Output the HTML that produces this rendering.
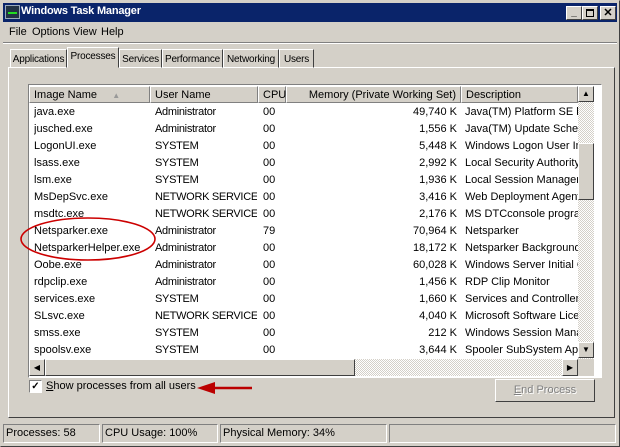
<!DOCTYPE html>
<html><head><style>
*{margin:0;padding:0;box-sizing:border-box}
body{width:620px;height:447px;background:#d4d0c8;font:11px "Liberation Sans",sans-serif;color:#000;position:relative;overflow:hidden}
.a{position:absolute;white-space:nowrap}
.out{border:1px solid;border-color:#fff #404040 #404040 #fff}
.in{border:1px solid;border-color:#808080 #fff #fff #808080}
.tab{position:absolute;top:49px;height:19px;border:1px solid;border-color:#fff #404040 transparent #fff;padding:4px 0 0;text-align:center;font-size:10px;letter-spacing:-0.2px;white-space:nowrap}
.hd{position:absolute;top:86px;height:17px;border:1px solid;border-color:#fff #808080 #808080 #fff;background:#d4d0c8;padding:2px 4px 0}
.row{position:absolute;left:30px;width:548px;height:17px}
.row span{position:absolute;top:2px;white-space:nowrap;overflow:hidden}
.sb{position:absolute;background:#d4d0c8;border:1px solid;border-color:#fff #404040 #404040 #fff}
</style></head><body>
<div class="a" style="left:0;top:0;width:620px;height:447px;border:1px solid;border-color:#d4d0c8 #404040 #404040 #d4d0c8"></div>
<div class="a" style="left:3px;top:3px;width:614px;height:19px;background:#0a246a"></div>
<div class="a" style="left:5px;top:5px;width:15px;height:14px;background:#234;border:1px solid #9ab"><div style="margin:3px 2px;height:5px;border-bottom:2px solid #2d2"></div></div>
<div class="a" style="left:21px;top:5px;color:#fff;font-weight:bold;font-size:11px;letter-spacing:-0.2px">Windows Task Manager</div>
<div class="a out" style="left:566px;top:6px;width:16px;height:14px;background:#d4d0c8;font-weight:bold;text-align:center;font-size:10px;line-height:12px">_</div>
<div class="a out" style="left:582px;top:6px;width:16px;height:14px;background:#d4d0c8"><div style="margin:2px 3px;height:8px;border:1px solid #000;border-top-width:2px"></div></div>
<div class="a out" style="left:600px;top:6px;width:16px;height:14px;background:#d4d0c8;font-weight:bold;text-align:center;line-height:12px">✕</div>
<div class="a" style="left:9px;top:26px">File</div>
<div class="a" style="left:32px;top:26px">Options</div>
<div class="a" style="left:73px;top:26px">View</div>
<div class="a" style="left:101px;top:26px">Help</div>
<div class="a" style="left:3px;top:42px;width:614px;height:2px;border-top:1px solid #808080;border-bottom:1px solid #fff"></div>
<div class="a" style="left:8px;top:67px;width:607px;height:351px;border:1px solid;border-color:#fff #404040 #404040 #fff"></div>
<div class="tab" style="left:10px;width:57px">Applications</div>
<div class="tab" style="left:67px;top:47px;height:21px;width:52px;background:#d4d0c8;z-index:2;padding-top:3px">Processes</div>
<div class="tab" style="left:119px;width:43px">Services</div>
<div class="tab" style="left:162px;width:61px">Performance</div>
<div class="tab" style="left:223px;width:56px">Networking</div>
<div class="tab" style="left:279px;width:35px">Users</div>
<div class="a in" style="left:28px;top:84px;width:574px;height:294px;background:#fff"></div>
<div class="hd" style="left:29px;width:121px">Image Name &nbsp;&nbsp;&nbsp;&nbsp;<span style="color:#999;font-size:8px">▲</span></div>
<div class="hd" style="left:150px;width:108px">User Name</div>
<div class="hd" style="left:258px;width:28px">CPU</div>
<div class="hd" style="left:286px;width:175px;text-align:right">Memory (Private Working Set)</div>
<div class="hd" style="left:461px;width:117px;overflow:hidden">Description</div>
<div id="rows"></div>
<div class="a" style="left:578px;top:102px;width:16px;height:257px;background:repeating-conic-gradient(#fff 0 25%,#d4d0c8 0 50%) 0 0/2px 2px"></div>
<div class="sb" style="left:578px;top:86px;width:16px;height:16px;font-size:8px;text-align:center;line-height:14px">▲</div>
<div class="sb" style="left:578px;top:143px;width:16px;height:57px"></div>
<div class="sb" style="left:578px;top:342px;width:16px;height:16px;font-size:8px;text-align:center;line-height:14px">▼</div>
<div class="a" style="left:29px;top:359px;width:549px;height:17px;background:repeating-conic-gradient(#fff 0 25%,#d4d0c8 0 50%) 0 0/2px 2px"></div>
<div class="sb" style="left:29px;top:359px;width:16px;height:17px;font-size:8px;text-align:center;line-height:15px">◀</div>
<div class="sb" style="left:45px;top:359px;width:310px;height:17px"></div>
<div class="sb" style="left:562px;top:359px;width:16px;height:17px;font-size:8px;text-align:center;line-height:15px">▶</div>
<div class="a" style="left:578px;top:359px;width:16px;height:17px;background:#d4d0c8"></div>
<svg class="a" style="left:0;top:0" width="620" height="447">
<ellipse cx="88" cy="239" rx="67" ry="21" fill="none" stroke="#c00" stroke-width="1.6"/>
<line x1="252" y1="388" x2="212" y2="388" stroke="#b00" stroke-width="2.5"/>
<polygon points="197,388 215,382 215,394" fill="#b00"/>
</svg>
<div class="a" style="left:29px;top:380px;width:13px;height:13px;background:#fff;border:1px solid;border-color:#808080 #fff #fff #808080;font-size:10px;line-height:11px;text-align:center;font-weight:bold">✓</div>
<div class="a" style="left:46px;top:380px"><u>S</u>how processes from all users</div>
<div class="a out" style="left:495px;top:379px;width:100px;height:23px;text-align:center;line-height:21px;color:#808080;text-shadow:1px 1px #fff"><u>E</u>nd Process</div>
<div class="a in" style="left:3px;top:424px;width:97px;height:19px;padding:2px 2px">Processes: 58</div>
<div class="a in" style="left:102px;top:424px;width:116px;height:19px;padding:2px 2px">CPU Usage: 100%</div>
<div class="a in" style="left:220px;top:424px;width:167px;height:19px;padding:2px 2px">Physical Memory: 34%</div>
<div class="a in" style="left:389px;top:424px;width:227px;height:19px"></div>
<script>
var d=[["java.exe","Administrator","00","49,740 K","Java(TM) Platform SE binary"],["jusched.exe","Administrator","00","1,556 K","Java(TM) Update Scheduler"],["LogonUI.exe","SYSTEM","00","5,448 K","Windows Logon User Interface"],["lsass.exe","SYSTEM","00","2,992 K","Local Security Authority"],["lsm.exe","SYSTEM","00","1,936 K","Local Session Manager Service"],["MsDepSvc.exe","NETWORK SERVICE","00","3,416 K","Web Deployment Agent"],["msdtc.exe","NETWORK SERVICE","00","2,176 K","MS DTCconsole program"],["Netsparker.exe","Administrator","79","70,964 K","Netsparker"],["NetsparkerHelper.exe","Administrator","00","18,172 K","Netsparker Background"],["Oobe.exe","Administrator","00","60,028 K","Windows Server Initial Config"],["rdpclip.exe","Administrator","00","1,456 K","RDP Clip Monitor"],["services.exe","SYSTEM","00","1,660 K","Services and Controller app"],["SLsvc.exe","NETWORK SERVICE","00","4,040 K","Microsoft Software Licensing"],["smss.exe","SYSTEM","00","212 K","Windows Session Manager"],["spoolsv.exe","SYSTEM","00","3,644 K","Spooler SubSystem App"]];
var h="";d.forEach(function(r,i){var t=104+i*17;h+='<div class="row" style="top:'+t+'px"><span style="left:4px">'+r[0]+'</span><span style="left:125px;letter-spacing:-0.3px;width:102px">'+r[1]+'</span><span style="left:233px">'+r[2]+'</span><span style="left:256px;width:171px;text-align:right">'+r[3]+'</span><span style="left:435px;width:113px">'+r[4]+'</span></div>'});
document.getElementById("rows").innerHTML=h;
</script>
</body></html>
